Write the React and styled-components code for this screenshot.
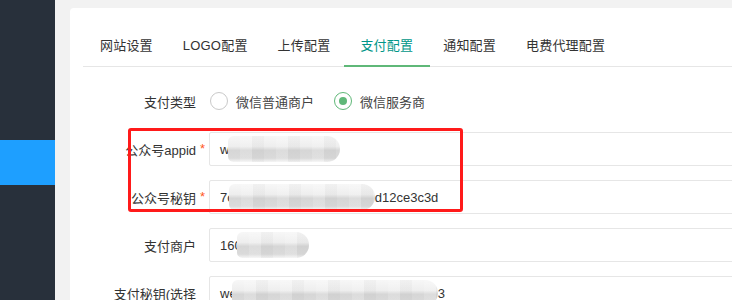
import React from "react";
import styled, { createGlobalStyle } from "styled-components";

const Global = createGlobalStyle`
  html, body { margin: 0; padding: 0; }
  body {
    background: #f2f2f2;
    font-family: "Liberation Sans", "Noto Sans CJK SC", sans-serif;
    font-size: 13px;
    color: #333;
    overflow: hidden;
  }
`;

const Page = styled.div`
  display: flex;
  height: 300px;
  width: 732px;
  overflow: hidden;
`;

const Sidebar = styled.nav`
  flex: none;
  width: 55px;
  background: #28303b;
  display: flex;
  flex-direction: column;
  padding-top: 140px;
  box-sizing: border-box;
`;

const SideItem = styled.div`
  height: 45px;
  background: ${(p) => (p.$active ? "#1e9fff" : "transparent")};
`;

const Main = styled.main`
  flex: 1;
  padding: 8px 0 0 15px;
  overflow: hidden;
`;

const Card = styled.section`
  position: relative;
  width: 900px;
  height: 400px;
  background: #fff;
  border-radius: 4px;
  padding: 18px 0 0 13px;
  box-sizing: border-box;
`;

const TabBar = styled.ul`
  display: flex;
  margin: 0;
  padding: 0 0 0 2px;
  list-style: none;
  height: 40px;
  border-bottom: 1px solid #e6e6e6;
`;

const Tab = styled.li`
  position: relative;
  padding: 0 15px;
  line-height: 40px;
  font-size: 13px;
  letter-spacing: 0.2px;
  color: ${(p) => (p.$active ? "#009688" : "#333")};
  white-space: nowrap;
  &::after {
    content: "";
    display: ${(p) => (p.$active ? "block" : "none")};
    position: absolute;
    left: -1px;
    right: -2px;
    bottom: -1px;
    height: 2px;
    background: #5fb878;
  }
`;

const Form = styled.div`
  display: flex;
  flex-direction: column;
  gap: 14px;
  padding-top: 17px;
`;

const Row = styled.div`
  display: flex;
  align-items: center;
  height: 34px;
`;

const Label = styled.label`
  position: relative;
  flex: none;
  width: 113px;
  text-align: right;
  white-space: nowrap;
  direction: rtl;
  color: #333;
  span { direction: ltr; unicode-bidi: embed; }
`;

const Required = styled.i`
  position: absolute;
  left: calc(100% + 4px);
  top: 1px;
  font-style: normal;
  color: #ff5722;
  direction: ltr;
`;

const Radios = styled.div`
  display: flex;
  align-items: center;
  margin-left: 14px;
  gap: 20px;
`;

const RadioItem = styled.div`
  display: flex;
  align-items: center;
  gap: 8px;
  color: #444;
`;

const RadioCircle = styled.span`
  position: relative;
  width: 18px;
  height: 18px;
  box-sizing: border-box;
  border-radius: 50%;
  border: 1.5px solid ${(p) => (p.$checked ? "#5fb878" : "#c9c9c9")};
  &::after {
    content: "";
    display: ${(p) => (p.$checked ? "block" : "none")};
    position: absolute;
    left: 50%;
    top: 50%;
    width: 8px;
    height: 8px;
    margin: -4px 0 0 -4px;
    border-radius: 50%;
    background: #5fb878;
  }
`;

const Input = styled.div`
  flex: none;
  width: 560px;
  height: 34px;
  box-sizing: border-box;
  margin-left: 13px;
  border: 1px solid #e6e6e6;
  border-radius: 2px;
  padding-left: 10px;
  display: flex;
  align-items: center;
  white-space: nowrap;
  color: #333;
  font-size: 13px;
`;

const Blur = styled.span`
  display: inline-block;
  flex: none;
  width: ${(p) => p.$w}px;
  margin-left: ${(p) => p.$ml || 0}px;
  height: 26px;
  border-radius: 6px 14px 14px 6px;
  background:
    repeating-linear-gradient(
      to right,
      rgba(255,255,255,0) 0 12px,
      rgba(255,255,255,0.15) 12px 24px,
      rgba(0,0,0,0.025) 24px 36px
    ),
    linear-gradient(to bottom, #f7f7f7 0%, #eeeeee 40%, #d6d6d6 55%, #dadada 85%, #f5f5f5 100%);
`;

const Highlight = styled.div`
  position: absolute;
  left: 58px;
  top: 120px;
  width: 335px;
  height: 84px;
  box-sizing: border-box;
  border: 3px solid #ff1a1a;
  border-radius: 3px;
  pointer-events: none;
`;

const tabs = ["网站设置", "LOGO配置", "上传配置", "支付配置", "通知配置", "电费代理配置"];

export default function App() {
  return (
    <>
      <Global />
      <Page>
        <Sidebar>
          <SideItem $active />
        </Sidebar>
        <Main>
          <Card>
            <TabBar>
              {tabs.map((t) => (
                <Tab key={t} $active={t === "支付配置"}>{t}</Tab>
              ))}
            </TabBar>
            <Form>
              <Row>
                <Label><span>支付类型</span></Label>
                <Radios>
                  <RadioItem><RadioCircle />微信普通商户</RadioItem>
                  <RadioItem><RadioCircle $checked />微信服务商</RadioItem>
                </Radios>
              </Row>
              <Row>
                <Label><span>公众号appid</span><Required>*</Required></Label>
                <Input>w<Blur $w={112} $ml={-1} /></Input>
              </Row>
              <Row>
                <Label><span>公众号秘钥</span><Required>*</Required></Label>
                <Input>7c<Blur $w={146} $ml={-5} />d12ce3c3d</Input>
              </Row>
              <Row>
                <Label><span>支付商户</span></Label>
                <Input>160<Blur $w={72} $ml={-5} /></Input>
              </Row>
              <Row>
                <Label><span>支付秘钥(选择</span></Label>
                <Input>we<Blur $w={206} $ml={-5} />3</Input>
              </Row>
            </Form>
            <Highlight />
          </Card>
        </Main>
      </Page>
    </>
  );
}
